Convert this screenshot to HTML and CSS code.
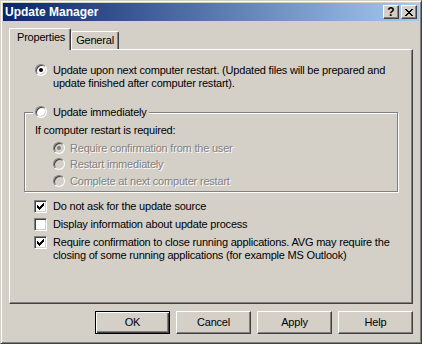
FILE: index.html
```html
<!DOCTYPE html>
<html>
<head>
  <title>Update Manager</title>
  <link rel="stylesheet" href="styles.css">
</head>
<body>
  <div class="window">
    <div class="titlebar">
      <span class="title">Update Manager</span>
      <div class="title-buttons">
        <span class="tb-btn help">?</span>
        <span class="tb-btn">
          <svg width="8" height="7" viewBox="0 0 8 7"><path d="M0 0h2v1H0z M6 0h2v1H6z M1 1h2v1H1z M5 1h2v1H5z M2 2h4v1H2z M3 3h2v1H3z M2 4h4v1H2z M1 5h2v1H1z M5 5h2v1H5z M0 6h2v1H0z M6 6h2v1H6z" fill="#000"/></svg>
        </span>
      </div>
    </div>

    <div class="dialog">
      <div class="tabs">
        <div class="tab active">Properties</div>
        <div class="tab">General</div>
      </div>

      <div class="panel">
        <div class="option first">
          <span class="radio on"></span>
          <span>Update upon next computer restart. (Updated files will be prepared and<br>update finished after computer restart).</span>
        </div>

        <div class="group">
          <div class="option group-title">
            <span class="radio"></span>
            <span>Update immediately</span>
          </div>
          <div class="note">If computer restart is required:</div>
          <div class="sub-options">
            <div class="option disabled"><span class="radio on"></span><span>Require confirmation from the user</span></div>
            <div class="option disabled"><span class="radio"></span><span>Restart immediately</span></div>
            <div class="option disabled"><span class="radio"></span><span>Complete at next computer restart</span></div>
          </div>
        </div>

        <div class="checks">
          <div class="option">
            <span class="check"><svg width="7" height="7" viewBox="0 0 7 7"><path d="M0 2h1v3H0z M1 3h1v3H1z M2 4h1v3H2z M3 3h1v3H3z M4 2h1v3H4z M5 1h1v3H5z M6 0h1v3H6z" fill="#000"/></svg></span>
            <span>Do not ask for the update source</span>
          </div>
          <div class="option">
            <span class="check"></span>
            <span>Display information about update process</span>
          </div>
          <div class="option">
            <span class="check"><svg width="7" height="7" viewBox="0 0 7 7"><path d="M0 2h1v3H0z M1 3h1v3H1z M2 4h1v3H2z M3 3h1v3H3z M4 2h1v3H4z M5 1h1v3H5z M6 0h1v3H6z" fill="#000"/></svg></span>
            <span>Require confirmation to close running applications. AVG may require the<br>closing of some running applications (for example MS Outlook)</span>
          </div>
        </div>
      </div>

      <div class="buttons">
        <button class="btn default">OK</button>
        <button class="btn">Cancel</button>
        <button class="btn">Apply</button>
        <button class="btn">Help</button>
      </div>
    </div>
  </div>
</body>
</html>
```

FILE: styles.css
```css
* {
  margin: 0;
  padding: 0;
  box-sizing: border-box;
}

body {
  font-family: "Liberation Sans", Arial, sans-serif;
  font-size: 11px;
  line-height: 13px;
  letter-spacing: -0.2px;
  color: #000;
  background: #d4d0c8;
}

.window {
  width: 422px;
  height: 344px;
  display: flex;
  flex-direction: column;
  padding: 2px;
  background: #d4d0c8;
  border: 1px solid;
  border-color: #d4d0c8 #404040 #404040 #d4d0c8;
  box-shadow: inset 1px 1px #fff, inset -1px -1px #808080;
}

.titlebar {
  height: 18px;
  display: flex;
  align-items: center;
  justify-content: space-between;
  padding: 0 2px;
  background: linear-gradient(to right, #0a246a, #a6caf0);
}

.title {
  color: #fff;
  font-weight: bold;
  font-size: 12px;
  line-height: 18px;
  letter-spacing: 0;
}

.title-buttons {
  display: flex;
  gap: 2px;
}

.tb-btn {
  width: 16px;
  height: 14px;
  display: flex;
  align-items: center;
  justify-content: center;
  background: #d4d0c8;
  border: 1px solid;
  border-color: #fff #404040 #404040 #fff;
  box-shadow: inset -1px -1px #808080;
}

.help {
  font-weight: bold;
  font-size: 12px;
  line-height: 12px;
  letter-spacing: 0;
}

.dialog {
  flex: 1;
  display: flex;
  flex-direction: column;
  padding: 7px 6px;
}

.tabs {
  display: flex;
  align-items: flex-end;
  height: 21px;
}

.tab {
  height: 18px;
  padding: 2px 4px 0;
  border: 1px solid;
  border-bottom: none;
  border-color: #fff #404040 #fff #fff;
  border-radius: 2px 2px 0 0;
  box-shadow: inset -1px 0 #808080;
}

.tab.active {
  height: 22px;
  padding: 2px 5px 0 7px;
  margin-bottom: -1px;
  position: relative;
  z-index: 1;
  background: #d4d0c8;
}

.panel {
  flex: 1;
  padding: 14px 14px 0;
  border: 1px solid;
  border-color: #fff #404040 #404040 #fff;
  box-shadow: inset -1px -1px #808080;
}

.option {
  display: flex;
  align-items: flex-start;
  gap: 6px;
}

.first {
  padding-left: 11px;
}

.radio {
  flex: none;
  width: 12px;
  height: 12px;
  display: flex;
  align-items: center;
  justify-content: center;
  border-radius: 50%;
  background: #fff;
  border: 1px solid;
  border-color: #808080 #fff #fff #808080;
  box-shadow: inset 1px 1px #404040, inset -1px -1px #d4d0c8;
}

.radio.on::after {
  content: "";
  width: 4px;
  height: 4px;
  border-radius: 50%;
  background: #000;
}

.group {
  margin-top: 22px;
  padding: 0 0 3.5px 10px;
  border: 1px solid #808080;
  box-shadow: inset 1px 1px #fff, 1px 1px #fff;
}

.group-title {
  width: fit-content;
  margin: -7px 0 0 -2px;
  padding: 0 2px;
  background: #d4d0c8;
}

.note {
  margin-top: 5px;
}

.sub-options {
  margin-top: 4.5px;
  padding-left: 18px;
  display: flex;
  flex-direction: column;
  gap: 3.5px;
}

.sub-options .option {
  gap: 5px;
}

.disabled {
  color: #808080;
  text-shadow: 1px 1px #fff;
}

.disabled .radio {
  background: #d4d0c8;
}

.disabled .radio.on::after {
  background: #808080;
}

.checks {
  margin-top: 8px;
  padding-left: 10px;
  display: flex;
  flex-direction: column;
  gap: 5px;
}

.check {
  flex: none;
  width: 13px;
  height: 13px;
  padding: 2px;
  background: #fff;
  border: 1px solid;
  border-color: #808080 #fff #fff #808080;
  box-shadow: inset 1px 1px #404040, inset -1px -1px #d4d0c8;
}

.check svg {
  display: block;
}

.buttons {
  display: flex;
  justify-content: flex-end;
  gap: 6px;
  margin-top: 7px;
}

.btn {
  width: 75px;
  height: 23px;
  font: inherit;
  letter-spacing: inherit;
  color: #000;
  background: #d4d0c8;
  border: 1px solid;
  border-color: #fff #404040 #404040 #fff;
  box-shadow: inset -1px -1px #808080;
}

.btn.default {
  border-color: #000;
  box-shadow: inset 1px 1px #fff, inset -1px -1px #404040, inset -2px -2px #808080;
}
```
